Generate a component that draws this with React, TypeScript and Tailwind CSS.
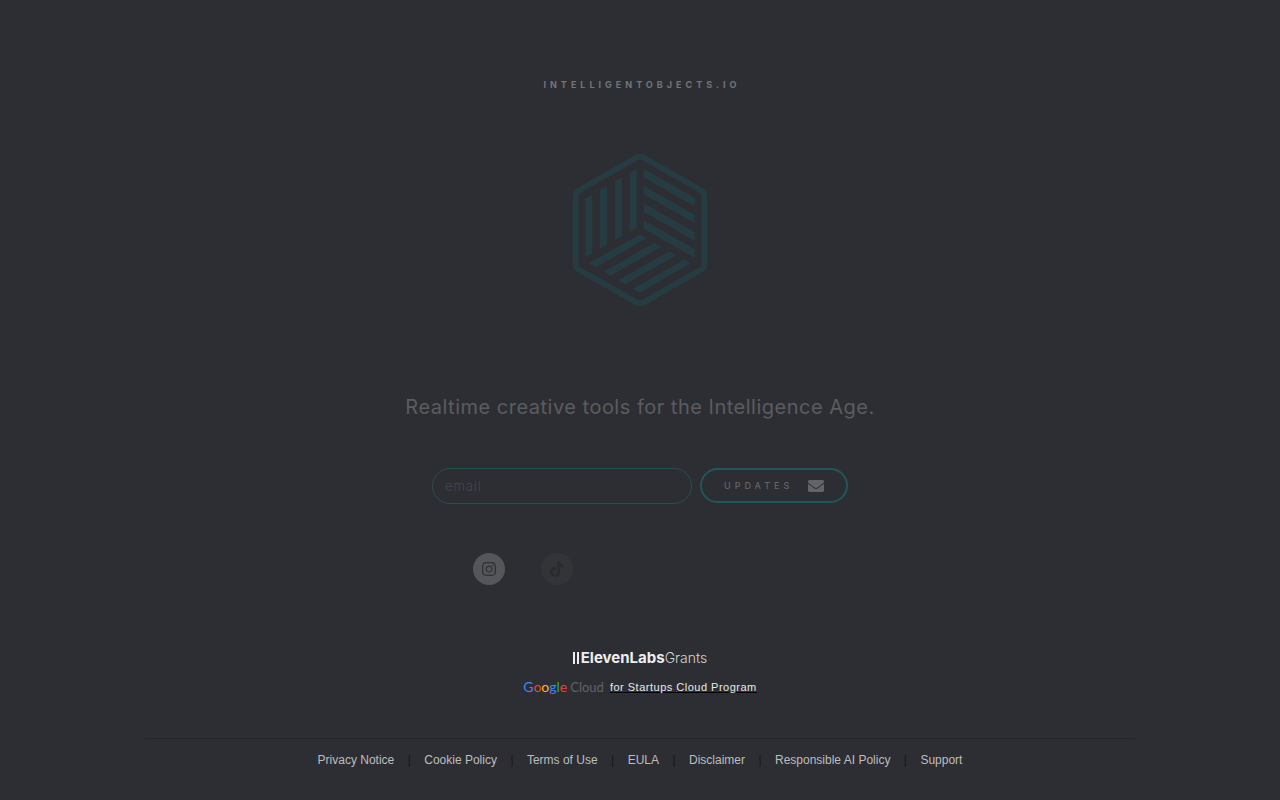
import React from "react";
import { FaEnvelope } from "react-icons/fa";
import { FaInstagram, FaTiktok } from "react-icons/fa6";

const links = [
  "Privacy Notice",
  "Cookie Policy",
  "Terms of Use",
  "EULA",
  "Disclaimer",
  "Responsible AI Policy",
  "Support",
];

function CubeLogo() {
  return (
    <svg viewBox="0 0 480 510" className="h-[170px] w-[160px]" role="img" aria-label="Intelligent Objects">
      <path
        d="M229 38 Q240 32 251 38 L423 136 Q433 142 433 153 V357 Q433 368 423 374 L251 472 Q240 478 229 472 L57 374 Q47 368 47 357 V153 Q47 142 57 136 Z"
        fill="none"
        stroke="#253d42"
        strokeWidth="17"
      />
      <g fill="#253d42">
        <path d="M76 160 L97 149 V325 L76 336 Z" />
        <path d="M120 135 L141 123 V299 L120 311 Z" />
        <path d="M165 109 L186 98 V274 L165 285 Z" />
        <path d="M209 84 L230 72 V248 L209 260 Z" />
        <path d="M251 72 L404 159 V184 L251 97 Z" />
        <path d="M251 123 L404 210 V235 L251 148 Z" />
        <path d="M251 175 L404 262 V287 L251 200 Z" />
        <path d="M251 226 L404 313 V338 L251 251 Z" />
        <path d="M87 355 L240 268 L260 280 L107 367 Z" />
        <path d="M131 380 L284 293 L304 305 L151 392 Z" />
        <path d="M175 406 L328 319 L349 330 L196 418 Z" />
        <path d="M219 431 L372 344 L392 355 L239 443 Z" />
      </g>
    </svg>
  );
}

export default function App() {
  return (
    <div className="flex min-h-screen flex-col items-center bg-[#2d2e33] pt-[78px] font-['Inter',sans-serif]">
      <h1 className="pl-1 text-[9px] leading-[14px] font-bold tracking-[4px] text-[#737477]">
        INTELLIGENTOBJECTS.IO
      </h1>
      <div className="mt-[53px]">
        <CubeLogo />
      </div>
      <p className="mt-[76px] text-xl leading-8 tracking-[0.5px] text-[#5b5c60]">
        Realtime creative tools for the Intelligence Age.
      </p>

      <form className="mt-[45px] flex gap-2" onSubmit={(e) => e.preventDefault()}>
        <input
          type="email"
          aria-label="email"
          placeholder="email"
          className="h-9 w-[260px] rounded-full border border-[#245054] bg-transparent px-3 text-[13px] font-extralight tracking-[1px] text-[#77787b] outline-none placeholder:text-[#505155]"
        />
        <button
          type="submit"
          className="flex h-[35px] w-[148px] items-center justify-between rounded-full border-2 border-[#21575b] px-[22px] text-[9px] font-medium tracking-[4px] text-[#636467]"
        >
          UPDATES
          <FaEnvelope className="size-4" />
        </button>
      </form>

      <div className="mt-[49px] flex w-[334px] gap-9">
        <a
          href="#instagram"
          aria-label="Instagram"
          className="flex size-8 items-center justify-center rounded-full bg-[#555659] text-[#303136]"
        >
          <FaInstagram className="size-4" />
        </a>
        <a
          href="#tiktok"
          aria-label="TikTok"
          className="flex size-8 items-center justify-center rounded-full bg-[#333438] text-[#2a2b2f]"
        >
          <FaTiktok className="size-4" />
        </a>
      </div>

      <div className="mt-[63px] flex items-center leading-5">
        <span className="mr-[2px] flex gap-[2px]" aria-hidden="true">
          <span className="h-3 w-[2px] bg-[#eeeeef]" />
          <span className="h-3 w-[2px] bg-[#eeeeef]" />
        </span>
        <span className="text-[15px] leading-5 font-bold text-[#eeeeef]">ElevenLabs</span>
        <span className="text-sm leading-5 font-light text-[#d5d5d6]">Grants</span>
      </div>

      <div className="mt-[9px] flex items-center gap-[6px]">
        <span className="flex items-baseline gap-[3px] font-['Lato',sans-serif] leading-5">
          <span className="text-sm leading-5">
            <span className="text-[#4285f4]">G</span>
            <span className="text-[#ea4335]">o</span>
            <span className="text-[#fbbc04]">o</span>
            <span className="text-[#4285f4]">g</span>
            <span className="text-[#34a853]">l</span>
            <span className="text-[#ea4335]">e</span>
          </span>
          <span className="text-[13px] leading-5 text-[#5f6368]">Cloud</span>
        </span>
        <a
          href="#startups"
          className="font-['Liberation_Sans',Arial,sans-serif] text-[11px] leading-5 tracking-[0.5px] text-[#e8e8e9] underline decoration-black"
        >
          for Startups Cloud Program
        </a>
      </div>

      <footer className="mt-[41px] w-[77.4%] border-t border-[#232428] pt-[11px] pb-7">
        <nav
          aria-label="Legal"
          className="flex items-center justify-center font-['Liberation_Sans',Arial,sans-serif] text-xs leading-5"
        >
          {links.map((label, i) => (
            <React.Fragment key={label}>
              {i > 0 && <span className="w-[30px] text-center text-[#151619]">|</span>}
              <a href="#legal" className="text-[#bdbdbf]">
                {label}
              </a>
            </React.Fragment>
          ))}
        </nav>
      </footer>
    </div>
  );
}
